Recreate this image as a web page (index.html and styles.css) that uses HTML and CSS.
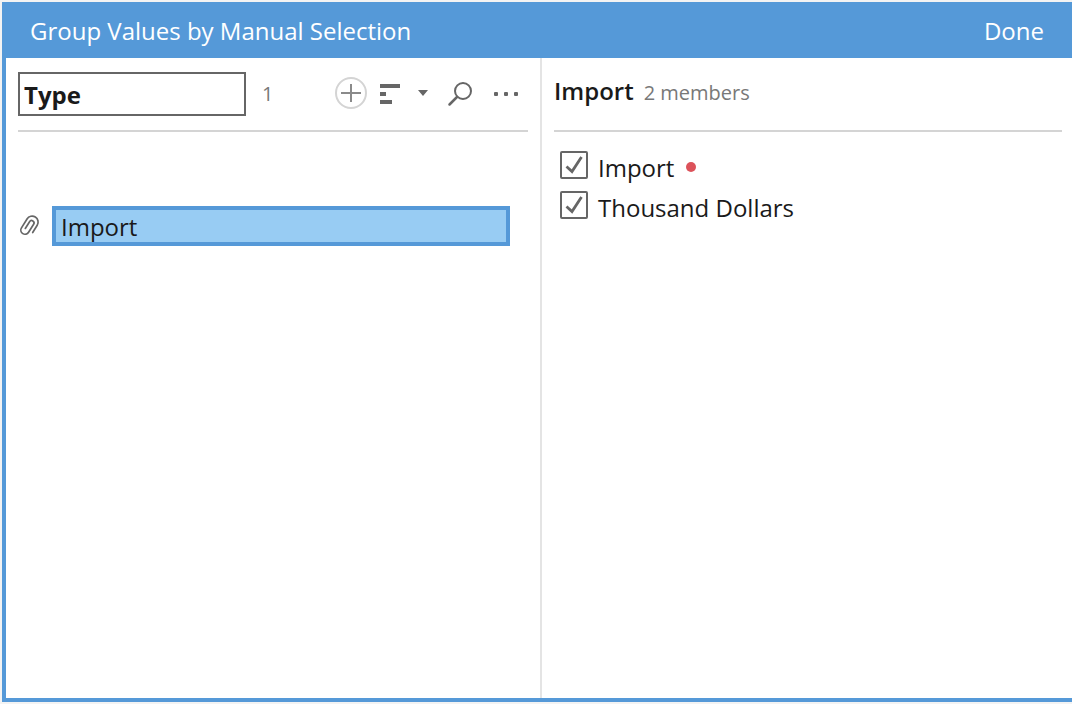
FILE: index.html
```html
<!DOCTYPE html>
<html lang="en">
<head>
<meta charset="utf-8">
<title>Group Values by Manual Selection</title>
<link rel="stylesheet" href="styles.css">
</head>
<body>
<main class="dialog">
  <header class="titlebar">
    <h1 class="title">Group Values by Manual Selection</h1>
    <button class="done" type="button">Done</button>
  </header>
  <div class="panels">
    <section class="panel groups" aria-label="Groups">
      <div class="panel-head">
        <input class="field-name" type="text" value="Type" aria-label="Field name">
        <span class="count">1</span>
        <div class="tools">
          <button class="tool add" type="button" aria-label="Add">
            <svg width="32" height="32" viewBox="0 0 32 32" fill="none"><circle cx="16" cy="15" r="15" stroke="#d4d4d4" stroke-width="2"/><path d="M6 15H26M16 6V24" stroke="#8a8a8a" stroke-width="2"/></svg>
          </button>
          <button class="tool sort" type="button" aria-label="Sort">
            <svg width="48" height="20" viewBox="0 0 48 20" fill="#666"><path d="M0 0H20V4H0ZM0 8H6V12H0ZM0 16H12V20H0ZM38 6H48L43 12Z"/></svg>
          </button>
          <button class="tool search" type="button" aria-label="Search">
            <svg width="24" height="24" viewBox="0 0 24 24" fill="none" stroke="#666" stroke-linecap="round"><circle cx="15" cy="9" r="8" stroke-width="2"/><path d="M9 15L1.500 22.500" stroke-width="2.500"/></svg>
          </button>
          <button class="tool more" type="button" aria-label="More options">
            <svg width="24" height="4" viewBox="0 0 24 4" fill="#666"><rect width="4" height="4" rx="1"/><rect x="10" width="4" height="4" rx="1"/><rect x="20" width="4" height="4" rx="1"/></svg>
          </button>
        </div>
      </div>
      <ul class="group-list">
        <li class="group">
          <svg class="clip" width="22" height="24" viewBox="0 0 22 24" fill="none" stroke="#666" stroke-width="1.700" stroke-linecap="round"><path transform="rotate(32 12 11.500)" d="M18 16V7.500a6 6 0 0 0-12 0V18a4.200 4.200 0 0 0 8.400 0V8.500a2.400 2.400 0 0 0-4.800 0V16.500"/></svg>
          <button class="group-name" type="button">Import</button>
        </li>
      </ul>
    </section>
    <section class="panel members" aria-label="Members">
      <div class="panel-head member-head">
        <h2 class="group-title">Import</h2>
        <span class="member-count">2 members</span>
      </div>
      <ul class="member-list">
        <li class="member">
          <label class="member-label"><input class="check" type="checkbox" checked><span>Import</span></label>
          <span class="dot"></span>
        </li>
        <li class="member">
          <label class="member-label"><input class="check" type="checkbox" checked><span>Thousand Dollars</span></label>
        </li>
      </ul>
    </section>
  </div>
</main>
</body>
</html>
```
FILE: styles.css
```css
* {
  box-sizing: border-box;
}

body {
  margin: 0;
  background: #f3f3f3;
  color: #1a1a1a;
  font-family: "Open Sans", "Noto Sans", sans-serif;
  font-size: 24px;
  line-height: 32px;
}

button,
input {
  font: inherit;
  color: inherit;
}

button {
  padding: 0;
  border: 0;
  background: none;
}

h1,
h2,
ul {
  margin: 0;
  padding: 0;
  list-style: none;
}

.dialog {
  display: flex;
  flex-direction: column;
  min-height: calc(100vh - 4px);
  margin: 2px 0 2px 2px;
  border: solid #5599d8;
  border-width: 0 0 4px 4px;
  background: #fff;
}

.titlebar {
  display: flex;
  align-items: center;
  justify-content: space-between;
  height: 56px;
  padding: 2px 28px 0 24px;
  background: #5599d8;
  color: #fff;
}

.title {
  font-size: 24px;
  font-weight: 400;
}

.panels {
  display: grid;
  flex: 1;
  grid-template-columns: 536fr 530fr;
}

.groups {
  padding: 0 12px;
  border-right: 2px solid #e4e4e4;
}

.members {
  padding: 0 10px 0 12px;
}

.panel-head {
  display: flex;
  align-items: center;
  height: 74px;
  border-bottom: 2px solid #d4d4d4;
}

.member-head {
  align-items: baseline;
  padding-top: 17px;
}

.field-name {
  width: 228px;
  height: 44px;
  padding: 0 4px;
  border: 2px solid #666;
  border-radius: 0;
  font-weight: 700;
}

.count,
.member-count {
  color: #787878;
  font-size: 20px;
}

.count {
  margin-left: 16px;
}

.tools {
  display: flex;
  align-items: center;
  margin-left: auto;
  padding-right: 10px;
}

.tool {
  display: flex;
}

.tool svg {
  overflow: visible;
}

.sort {
  margin-left: 13px;
}

.search {
  margin-left: 20px;
}

.more {
  margin-left: 22px;
}

.group-list {
  padding: 74px 18px 0 0;
}

.group {
  display: flex;
  align-items: center;
  gap: 12px;
}

.group-name {
  flex: 1;
  height: 40px;
  padding: 2px 5px 0;
  border: 4px solid #5599d8;
  background: #98ccf3;
  line-height: 28px;
  text-align: left;
}

.group-title {
  font-size: 24px;
  font-weight: 600;
}

.member-count {
  margin-left: 10px;
}

.member-list {
  padding: 15px 6px;
}

.member {
  display: flex;
  align-items: center;
  gap: 12px;
  height: 40px;
}

.member-label {
  display: flex;
  align-items: flex-end;
  gap: 10px;
}

.check {
  width: 28px;
  height: 28px;
  margin: 0 0 5px;
  appearance: none;
  border: 2px solid #666;
  border-radius: 2px;
}

.check:checked {
  background: url("data:image/svg+xml,%3Csvg xmlns='http://www.w3.org/2000/svg' viewBox='0 0 24 24' fill='none' stroke='%23666' stroke-width='2.800'%3E%3Cpath d='M4.500 13.500L10 18.500L19.500 4'/%3E%3C/svg%3E") center / 24px;
}

.dot {
  width: 10px;
  height: 10px;
  border-radius: 50%;
  background: #dc525a;
}
```
